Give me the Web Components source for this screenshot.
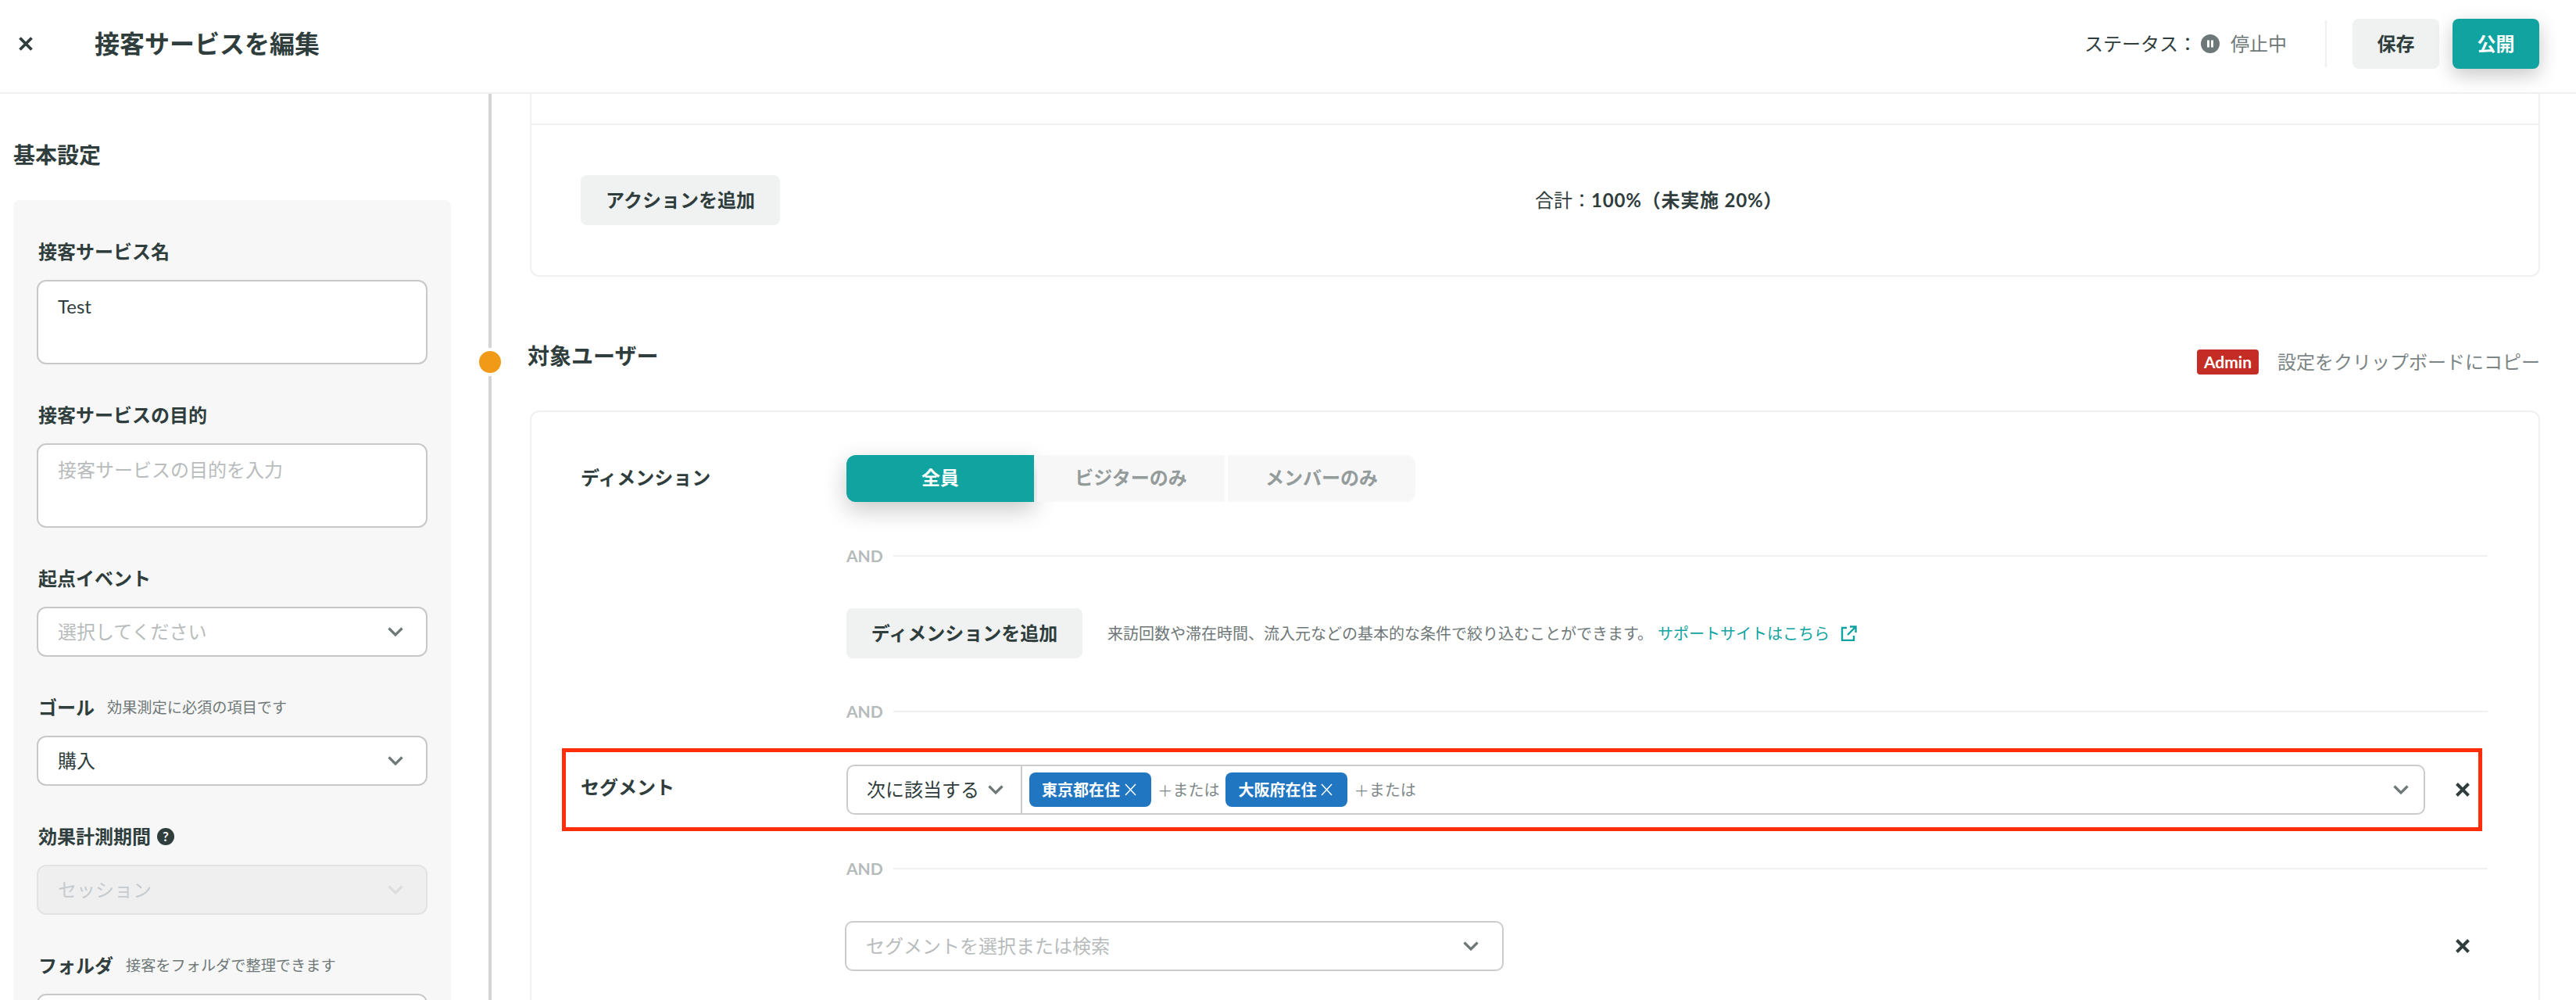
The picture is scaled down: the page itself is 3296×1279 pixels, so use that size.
<!DOCTYPE html>
<html lang="ja">
<head>
<meta charset="utf-8">
<title>接客サービスを編集</title>
<style>
html,body{margin:0;padding:0;background:#fff}
body{font-family:"Lato","Noto Sans CJK JP","Noto Sans",sans-serif;color:#2f3d3d;font-size:24px;line-height:1.4;width:3296px;height:1279px;overflow:hidden}
</style>
</head>
<body>
<x-app>
  <x-header slot="header" title-text="接客サービスを編集"></x-header>
  <x-sidebar slot="side">
    <x-field label="接客サービス名"><x-input value="Test"></x-input></x-field>
    <x-field label="接客サービスの目的"><x-input placeholder="接客サービスの目的を入力"></x-input></x-field>
    <x-field label="起点イベント"><x-select placeholder="選択してください"></x-select></x-field>
    <x-field label="ゴール" note="効果測定に必須の項目です"><x-select value="購入"></x-select></x-field>
    <x-field label="効果計測期間" help="1"><x-select value="セッション" disabled></x-select></x-field>
    <x-field label="フォルダ" note="接客をフォルダで整理できます"><x-select></x-select></x-field>
  </x-sidebar>
  <x-main slot="main">
    <x-summary></x-summary>
    <x-section title-text="対象ユーザー"></x-section>
    <x-card>
      <x-row label="ディメンション"><x-segmented></x-segmented></x-row>
      <x-and></x-and>
      <x-row><x-dimension-add></x-dimension-add></x-row>
      <x-and style="--t:56px;--b:56px"></x-and>
      <x-row label="セグメント" highlight><x-segment-field></x-segment-field></x-row>
      <x-and></x-and>
      <x-row><x-segment-new></x-segment-new></x-row>
    </x-card>
  </x-main>
</x-app>
<script>
const CHEV = (c='#6f7878',w=20,h=12)=>`<svg width="${w}" height="${h}" viewBox="0 0 20 12" fill="none"><path d="M1.5 1.5 10 10l8.5-8.5" stroke="${c}" stroke-width="3.2"/></svg>`;
const CROSS = (s=18,c='#2f3d3d',sw=4)=>`<svg width="${s}" height="${s}" viewBox="0 0 18 18" fill="none"><path d="M1.5 1.5l15 15M16.5 1.5l-15 15" stroke="${c}" stroke-width="${sw}"/></svg>`;
const def=(name,render)=>customElements.define(name,class extends HTMLElement{
  connectedCallback(){ if(this.shadowRoot) return; this.attachShadow({mode:'open'}).innerHTML=render(this); }
});
const BTN=`.btn{display:inline-flex;align-items:center;justify-content:center;height:64px;border-radius:8px;background:#f0f2f2;font-weight:700;font-size:24px;color:#2f3d3d;box-sizing:border-box}`;

def('x-app',()=>`<style>
:host{display:flex;flex-direction:column;width:3296px;height:1279px;overflow:hidden}
.body{display:flex;flex:1;min-height:0}
</style><slot name="header"></slot><div class="body"><slot name="side"></slot><slot name="main"></slot></div>`);

def('x-header',h=>`<style>${BTN}
:host{display:flex;align-items:center;height:112px;border-bottom:2px solid #f0f0f0;box-sizing:content-box;padding:0 47px 6px 24px;flex:none;position:relative;z-index:1;background:#fff}
.x{display:flex;margin-right:79px}
h1{margin:0;font-size:32px;font-weight:700;line-height:44px;flex:1}
.st{display:flex;align-items:center;font-size:24px;color:#2f3d3d}
.st i{display:flex;margin:0 14px 0 5px}
.st b{font-weight:400;color:#6f7878}
.dv{width:2px;height:60px;background:#f0f0f0;margin:0 33px 0 49px}
.pub{background:#10a3a0;color:#fff;margin-left:17px;width:112px;box-shadow:0 8px 24px rgba(0,0,0,.22)}
.btn{width:111px}
</style>
<span class="x">${CROSS(18,'#2f3d3d',3.8)}</span><h1>${h.getAttribute('title-text')}</h1>
<div class="st"><span>ステータス：</span><i><svg width="24" height="24" viewBox="0 0 24 24"><circle cx="12" cy="12" r="12" fill="#6f7878"/><rect x="8" y="7.5" width="3" height="9" fill="#fff"/><rect x="13" y="7.5" width="3" height="9" fill="#fff"/></svg></i><b>停止中</b></div>
<span class="dv"></span><span class="btn">保存</span><span class="btn pub">公開</span>`);

def('x-sidebar',()=>`<style>
:host{display:block;flex:none;border-right:4px solid #d5d5d5;overflow:hidden;padding:58px 0 0 17px;box-sizing:content-box;width:608px}
h2{margin:0 0 38px;font-size:28px;line-height:40px;font-weight:700}
.panel{width:560px;box-sizing:border-box;background:#f7f7f7;border-radius:8px;padding:50px 30px 60px}
</style><h2>基本設定</h2><div class="panel"><slot></slot></div>`);

def('x-field',h=>{
 const note=h.getAttribute('note'),help=h.hasAttribute('help');
 return `<style>
:host{display:block;margin-bottom:49px}
.l{display:flex;align-items:center;height:32px;margin:0 0 20px 2px;font-size:24px;font-weight:700;line-height:32px}
.n{font-size:19.2px;font-weight:400;color:#6f7878;margin-left:16px}
.h{display:inline-flex;align-items:center;justify-content:center;width:22px;height:22px;border-radius:50%;background:#2f3d3d;color:#fff;font-size:17px;font-weight:700;line-height:22px;margin-left:8px}
</style><div class="l"><span>${h.getAttribute('label')}</span>${note?`<span class="n">${note}</span>`:''}${help?'<span class="h">?</span>':''}</div><slot></slot>`;
});

def('x-input',h=>{
 const v=h.getAttribute('value'),p=h.getAttribute('placeholder');
 return `<style>
:host{display:block;height:108px;box-sizing:border-box;width:500px;background:#fff;border:2px solid #c8c8c8;border-radius:12px;padding:14px 25px;font-size:24px;line-height:36px;color:${v?'#2f3d3d':'#b8bcbc'}}
</style>${v||p}`;
});

def('x-select',h=>{
 const v=h.getAttribute('value'),p=h.getAttribute('placeholder'),d=h.hasAttribute('disabled');
 return `<style>
:host{display:flex;align-items:center;justify-content:space-between;width:500px;height:64px;box-sizing:border-box;background:${d?'#efefef':'#fff'};border:2px solid ${d?'#e3e3e3':'#c8c8c8'};border-radius:12px;padding:0 29px 0 25px;font-size:24px;color:${d?'#c6cbcf':(v?'#2f3d3d':'#b8bcbc')}}
</style><span>${v||p||''}</span>${CHEV(d?'#dcdddd':'#6f7878')}`;
});

def('x-main',()=>`<style>
:host{display:block;flex:1;min-width:0;padding:0 46px 0 49px;position:relative}
</style><slot></slot>`);

def('x-summary',()=>`<style>${BTN}
:host{display:block;height:234px;box-sizing:border-box;border:2px solid #f0f0f0;border-top:0;border-radius:0 0 12px 12px}
.a{height:38px;border-bottom:2px solid #f0f0f0}
.b{display:flex;align-items:center;height:192px;padding-left:63px}
.btn{width:255px}
.t{margin-left:966px;font-size:24px}
.t b{font-weight:700;letter-spacing:.8px}
</style><div class="a"></div><div class="b"><span class="btn">アクションを追加</span><span class="t">合計：<b>100%（未実施 20%）</b></span></div>`);

def('x-section',h=>`<style>
:host{display:flex;justify-content:space-between;align-items:flex-start;height:90px;margin:81px 0 0 -3px;position:relative}
h2{margin:0;font-size:28px;font-weight:700;line-height:40px}
.dot{position:absolute;left:-62px;top:14px;width:28px;height:28px;border-radius:50%;background:#f09a17;box-shadow:0 0 0 4px #fff}
.r{display:flex;align-items:center;margin-top:11px;color:#7b8585;font-size:24px}
.ad{display:inline-flex;align-items:center;justify-content:center;width:79px;height:32px;border-radius:4px;background:#c32d25;color:#fff;font-size:21px;font-weight:700;margin-right:24px}
</style><span class="dot"></span><h2>${h.getAttribute('title-text')}</h2><div class="r"><span class="ad">Admin</span><span>設定をクリップボードにコピー</span></div>`);

def('x-card',()=>`<style>
:host{display:block;border:2px solid #f0f0f0;border-radius:12px;padding:55px 65px 120px 63px}
</style><slot></slot>`);

def('x-row',h=>{
 const hl=h.hasAttribute('highlight');
 return `<style>
:host{display:grid;grid-template-columns:340px 1fr;align-items:center;position:relative}
.l{font-size:24px;font-weight:700;line-height:32px;padding-bottom:${hl?6:2}px}
.red{position:absolute;top:-21px;bottom:-21px;left:-24px;right:7px;border:5px solid #ff2d0a;pointer-events:none}
</style><div class="l">${h.getAttribute('label')||''}</div><div><slot></slot></div>${hl?'<span class="red"></span>':''}`;
});

def('x-and',()=>`<style>
:host{display:flex;align-items:center;height:24px;margin:var(--t,57px) 0 var(--b,55px) 340px;color:#b5baba;font-size:21px;font-weight:700}
i{flex:1;height:2px;background:#f0f0f0;margin-left:13px}
</style><span>AND</span><i></i>`);

def('x-segmented',()=>`<style>
:host{display:flex;gap:4px}
span{display:flex;align-items:center;justify-content:center;width:240px;height:60px;box-sizing:border-box;padding-bottom:2px;background:#f7f7f7;color:#949b9b;font-size:24px;font-weight:700}
.on{background:#10a3a0;color:#fff;border-radius:12px 0 0 12px;box-shadow:0 10px 30px rgba(0,0,0,.22)}
.e{border-radius:0 12px 12px 0}
</style><span class="on">全員</span><span>ビジターのみ</span><span class="e">メンバーのみ</span>`);

def('x-dimension-add',()=>`<style>${BTN}
:host{display:flex;align-items:center}
.btn{width:302px}
.d{margin-left:32px;font-size:20px;color:#6f7878}
a{margin-left:6px;font-size:20px;color:#10a3a0}
svg{margin-left:14px}
</style><span class="btn">ディメンションを追加</span><span class="d">来訪回数や滞在時間、流入元などの基本的な条件で絞り込むことができます。</span><a>サポートサイトはこちら</a><svg width="21" height="20" viewBox="0 0 21 20" fill="none" stroke="#10a3a0" stroke-width="2.4"><path d="M8 3H2v16h15v-6"/><path d="M9 12 19 2M12 1.5h7.5V9"/></svg>`);

def('x-tag',h=>`<style>
:host{display:inline-flex;align-items:center;height:44px;width:156px;box-sizing:border-box;padding-left:16px;background:#2176c1;border-radius:8px;color:#fff;font-size:20px;font-weight:700}
svg{margin-left:5px}
</style><slot></slot><svg width="17" height="16" viewBox="0 0 17 16" fill="none"><path d="M2 1l13 14M15 1 2 15" stroke="#fff" stroke-width="1.5"/></svg>`);

def('x-segment-field',()=>`<style>
:host{display:flex;align-items:center}
.f{flex:1;display:flex;align-items:center;height:64px;box-sizing:border-box;border:2px solid #ccc;border-radius:10px}
.m{display:flex;align-items:center;width:223px;height:100%;box-sizing:border-box;border-right:2px solid #ccc;padding-left:24px;font-size:24px;color:#2f3d3d}
.m svg{margin-left:11px}
.v{flex:1;display:flex;align-items:center;padding-left:9px}
.o{font-size:20px;color:#7f8888;margin:0 8px 0 9px;display:inline-flex;align-items:center}
.o em{font-style:normal;font-weight:300;font-size:30px;line-height:20px;margin-right:1px}
.c{margin-right:19px;display:flex}
.xx{display:flex;margin:0 23px 0 39px}
</style><div class="f"><div class="m"><span>次に該当する</span>${CHEV('#6f7878',20,12)}</div><div class="v"><x-tag>東京都在住</x-tag><span class="o"><em>+</em>または</span><x-tag>大阪府在住</x-tag><span class="o"><em>+</em>または</span></div><span class="c">${CHEV()}</span></div><span class="xx">${CROSS()}</span>`);

def('x-segment-new',()=>`<style>
:host{display:flex;align-items:center;justify-content:space-between;margin-left:-2px}
.s{display:flex;align-items:center;justify-content:space-between;width:843px;height:64px;box-sizing:border-box;border:2px solid #ccc;border-radius:10px;padding:0 30px 0 25px;font-size:24px;color:#b8bcbc}
.xx{display:flex;margin-right:23px}
</style><div class="s"><span>セグメントを選択または検索</span>${CHEV()}</div><span class="xx">${CROSS()}</span>`);
</script>
</body>
</html>
